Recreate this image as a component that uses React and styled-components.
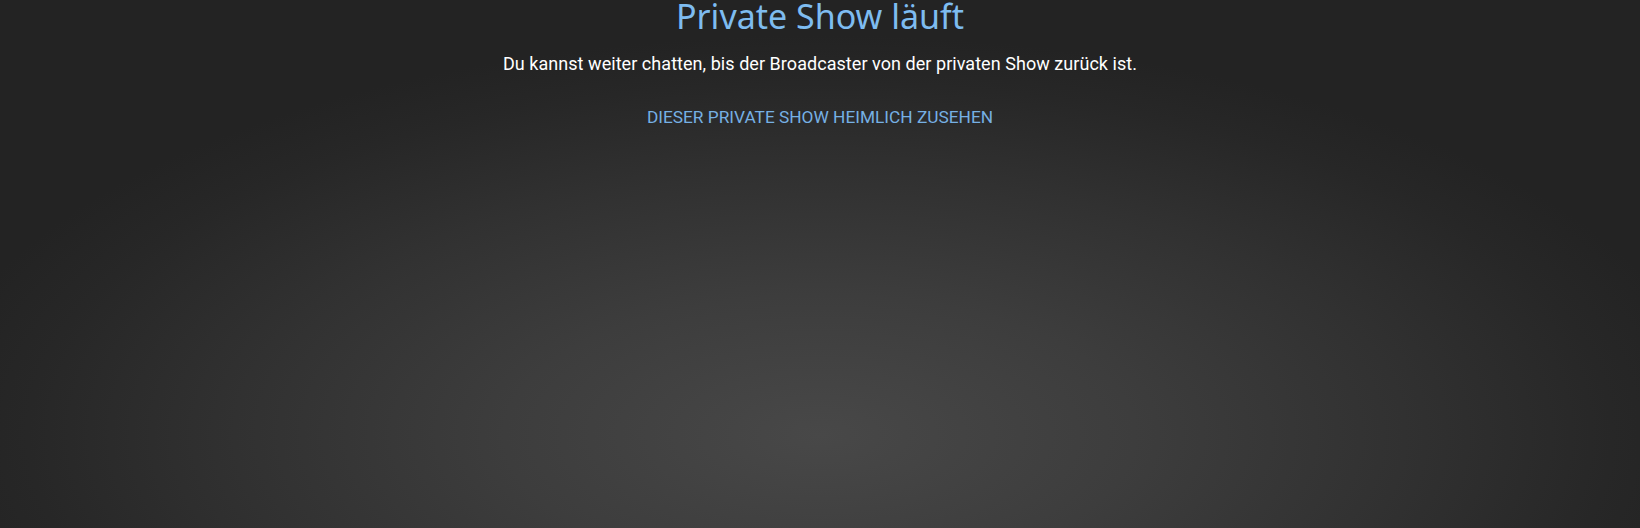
import React from "react";
import styled, { createGlobalStyle } from "styled-components";

const GlobalStyle = createGlobalStyle`
  html, body {
    margin: 0;
    padding: 0;
    background: #222222;
  }
  * {
    box-sizing: border-box;
  }
`;

const Stage = styled.div`
  width: 100%;
  height: 528px;
  overflow: hidden;
  background: radial-gradient(
    ellipse 900px 400px at 50% 435px,
    #484848 0%,
    #3d3d3d 35%,
    #313131 65%,
    #272727 88%,
    #232323 100%
  );
  display: flex;
  flex-direction: column;
  align-items: center;
  text-align: center;
`;

const Title = styled.h1`
  margin: 0;
  font-family: "Noto Sans", "Open Sans", sans-serif;
  font-weight: 400;
  font-size: 34px;
  line-height: 32px;
  color: #7ebcf0;
`;

const Message = styled.p`
  margin: 21px 0 0;
  font-family: Roboto, "Noto Sans", sans-serif;
  font-size: 18px;
  line-height: 22px;
  letter-spacing: 0.05px;
  color: #ffffff;
`;

const SpyLink = styled.a`
  margin-top: 31px;
  font-family: Roboto, "Noto Sans", sans-serif;
  font-size: 17.3px;
  line-height: 22px;
  letter-spacing: 0;
  color: #76b0e4;
  text-decoration: none;
  text-transform: uppercase;
  cursor: pointer;
`;

export default function App() {
  return (
    <>
      <GlobalStyle />
      <Stage>
        <Title>Private Show läuft</Title>
        <Message>
          Du kannst weiter chatten, bis der Broadcaster von der privaten Show
          zurück ist.
        </Message>
        <SpyLink href="#">Dieser private Show heimlich zusehen</SpyLink>
      </Stage>
    </>
  );
}
